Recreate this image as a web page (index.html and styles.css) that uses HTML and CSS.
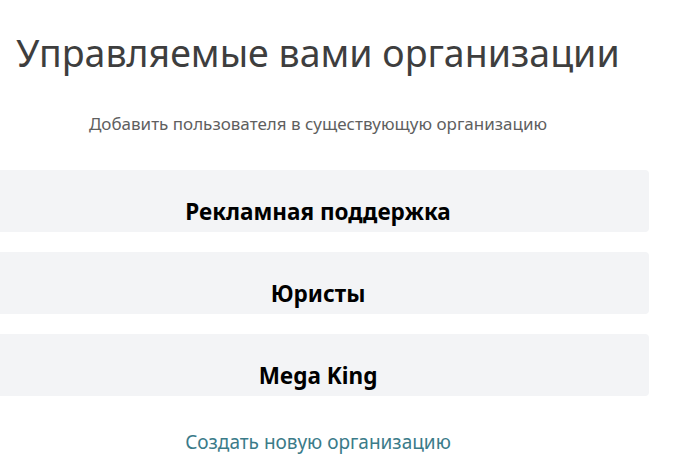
FILE: index.html
```html
<!DOCTYPE html>
<html lang="ru">
<head>
<meta charset="utf-8">
<title>Управляемые вами организации</title>
<link rel="stylesheet" href="styles.css">
</head>
<body>
<main class="page">
  <h1 class="title">Управляемые вами организации</h1>
  <p class="subtitle">Добавить пользователя в существующую организацию</p>
  <ul class="orgs">
    <li class="org"><span class="org-name">Рекламная поддержка</span></li>
    <li class="org"><span class="org-name">Юристы</span></li>
    <li class="org"><span class="org-name">Mega King</span></li>
  </ul>
  <a class="create" href="#">Создать новую организацию</a>
</main>
</body>
</html>
```
FILE: styles.css
```css
html, body {
  margin: 0;
  padding: 0;
  background: #ffffff;
}
body {
  font-family: "Noto Sans", "Open Sans", sans-serif;
  overflow: hidden;
}
.page {
  width: 662px;
  margin-left: -13px;
  display: flex;
  flex-direction: column;
  align-items: stretch;
  text-align: center;
}
.title {
  margin: 27px 0 0;
  font-size: 37.5px;
  font-weight: 400;
  line-height: 52px;
  color: #3e3e3e;
}
.subtitle {
  margin: 33px 0 0;
  font-size: 17px;
  line-height: 24px;
  color: #5f5f5f;
}
.orgs {
  list-style: none;
  margin: 34px 0 0;
  padding: 0;
  display: flex;
  flex-direction: column;
  gap: 20px;
}
.org {
  height: 62px;
  box-sizing: border-box;
  background: #f3f4f6;
  border-radius: 4px;
  display: flex;
  align-items: flex-end;
  justify-content: center;
  padding-bottom: 5px;
}
.org-name {
  font-size: 22.5px;
  font-weight: 700;
  line-height: 30px;
  color: #000;
}
.create {
  margin-top: 33px;
  font-size: 19px;
  line-height: 26px;
  color: #3b7b89;
  text-decoration: none;
}
```
